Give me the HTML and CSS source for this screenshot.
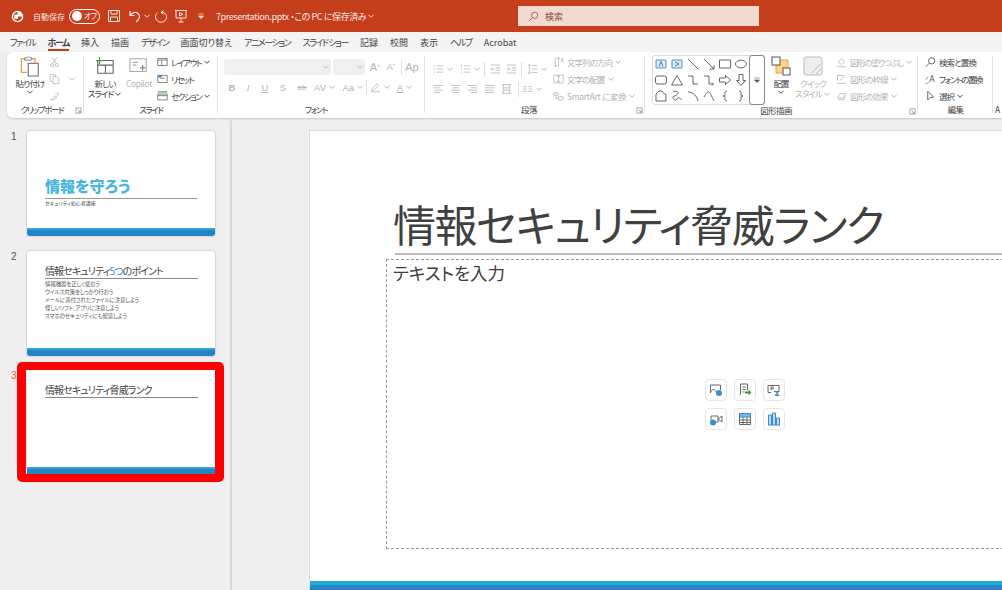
FILE: index.html
```html
<!DOCTYPE html>
<html lang="ja">

<head>
    <meta charset="UTF-8">
    <title>7presentation.pptx</title>
    <link rel="stylesheet" href="styles.css">
</head>

<body>
    <!-- 共通アイコン -->
    <svg class="sprite" xmlns="http://www.w3.org/2000/svg">
        <symbol id="chev" viewBox="0 0 8 8"><path d="M1.500 2.800 4 5.300l2.500-2.500" fill="none" stroke="currentColor" stroke-width="1"/></symbol>
        <symbol id="launcher" viewBox="0 0 8 8"><path d="M1 1h6v6H1zM3 3l3 3M6 4v2H4" fill="none" stroke="currentColor" stroke-width=".8"/></symbol>
        <symbol id="list-dots" viewBox="0 0 14 14"><path d="M5 3h8M5 7h8M5 11h8M1 3h2M1 7h2M1 11h2" fill="none" stroke="currentColor"/></symbol>
        <symbol id="list-num" viewBox="0 0 14 14"><path d="M5 3h8M5 7h8M5 11h8M2 1.500v3M1 7h2M1 11h2" fill="none" stroke="currentColor"/></symbol>
        <symbol id="indent-l" viewBox="0 0 14 14"><path d="M1 2h12M7 5.500h6M7 8.500h6M1 12h12M5 7H1M3 5 1 7l2 2" fill="none" stroke="currentColor"/></symbol>
        <symbol id="indent-r" viewBox="0 0 14 14"><path d="M1 2h12M7 5.500h6M7 8.500h6M1 12h12M1 7h4M3 5l2 2-2 2" fill="none" stroke="currentColor"/></symbol>
        <symbol id="line-sp" viewBox="0 0 14 14"><path d="M6 2.500h7M6 7h7M6 11.500h7M3 1v12M1.500 3 3 1l1.500 2M1.500 11 3 13l1.500-2" fill="none" stroke="currentColor"/></symbol>
        <symbol id="al-l" viewBox="0 0 14 14"><path d="M1 2.500h12M1 5.500h8M1 8.500h12M1 11.500h8" fill="none" stroke="currentColor"/></symbol>
        <symbol id="al-c" viewBox="0 0 14 14"><path d="M1 2.500h12M3 5.500h8M1 8.500h12M3 11.500h8" fill="none" stroke="currentColor"/></symbol>
        <symbol id="al-r" viewBox="0 0 14 14"><path d="M1 2.500h12M5 5.500h8M1 8.500h12M5 11.500h8" fill="none" stroke="currentColor"/></symbol>
        <symbol id="al-j" viewBox="0 0 14 14"><path d="M1 2.500h12M1 5.500h12M1 8.500h12M1 11.500h12" fill="none" stroke="currentColor"/></symbol>
        <symbol id="al-d" viewBox="0 0 14 14"><path d="M1 1.500h12M1 12.500h12M3 1.500v11M11 1.500v11M3 5.500h8M3 8.500h8" fill="none" stroke="currentColor"/></symbol>
        <symbol id="cols" viewBox="0 0 14 14"><path d="M1 4h5M8 4h5M1 7h5M8 7h5M1 10h5M8 10h5" fill="none" stroke="currentColor"/></symbol>
        <symbol id="fill" viewBox="0 0 14 14"><path d="M3 7 7 2.500 11 7l-4 3.500zM1 13h12" fill="none" stroke="currentColor"/></symbol>
        <symbol id="outline" viewBox="0 0 14 14"><path d="M2 9V2.500h8M5 8.500l7-6M1 12.500h12" fill="none" stroke="currentColor"/></symbol>
        <symbol id="effect" viewBox="0 0 14 14"><path d="M2 9.500 5 4h7l-2.500 5.500zM3 11.500h7l2-4" fill="none" stroke="currentColor"/></symbol>
    </svg>

    <header class="titlebar">
        <div class="title_left">
            <svg class="tb_logo" viewBox="0 0 14 14"><circle cx="7" cy="7" r="5.500" fill="none" stroke="#fff" stroke-width="1.500"/><path d="M7 7V1.500A5.500 5.500 0 0 1 12.500 7z" fill="#fff"/><rect x="3.500" y="5" width="4" height="4.500" fill="#fff"/></svg>
            <span class="autosave">自動保存</span>
            <span class="toggle"><i></i><b>オフ</b></span>
            <svg class="tb_icon save" viewBox="0 0 14 14"><path d="M1.500 1.500h11v11h-11zM4 1.500v3.500h6V1.500M3.500 12.500V8h7v4.500" fill="none" stroke="currentColor"/></svg>
            <svg class="tb_icon undo" viewBox="0 0 14 14"><path d="M2 2v4.500h4.500M2.300 6.300C4 3.500 7.500 2.500 10 4.500c2.500 2.200 2 5.500-2 8.500" fill="none" stroke="currentColor" stroke-width="1.200"/></svg>
            <svg class="tb_chev"><use href="#chev"/></svg>
            <svg class="tb_icon redo" viewBox="0 0 14 14"><path d="M9.500 1.500 7 3.500l2.500 1.500M7 3.500c3-.8 5.500 1.300 5.500 4.300a5.500 5.500 0 0 1-11 0c0-1.800.8-3.200 2-4.200" fill="none" stroke="currentColor"/></svg>
            <svg class="tb_icon present" viewBox="0 0 14 14"><path d="M1 1.500h12M2 1.500v7.500h10V1.500M7 9v4M4.500 13h5M5.500 3.500 9 5.300 5.500 7z" fill="none" stroke="currentColor"/></svg>
            <svg class="tb_more" viewBox="0 0 8 8"><path d="M1.500 2h5M1.500 4 4 6.500 6.500 4z" fill="currentColor" stroke="currentColor" stroke-width=".7"/></svg>
            <span class="filename">7presentation.pptx ・この PC に保存済み</span>
            <svg class="tb_chev"><use href="#chev"/></svg>
        </div>
        <div class="search">
            <svg viewBox="0 0 14 14"><circle cx="8.500" cy="5.500" r="4" fill="none" stroke="currentColor"/><path d="M5.500 8.500 1.500 12.500" stroke="currentColor" fill="none"/></svg>
            <span>検索</span>
        </div>
    </header>

    <nav class="tabs">
        <a class="kana">ファイル</a><a class="active kana">ホーム</a><a>挿入</a><a>描画</a><a class="kana">デザイン</a><a>画面切り替え</a><a class="kana">アニメーション</a><a class="kana">スライド ショー</a><a>記録</a><a>校閲</a><a>表示</a><a class="kana">ヘルプ</a><a>Acrobat</a>
    </nav>

    <section class="ribbon">
        <!-- クリップボード -->
        <div class="group g_clip">
            <div class="group_body">
                <div class="big_btn paste">
                    <svg class="big_icon" viewBox="0 0 22 24"><path d="M5 4H1.500v15H8M13 4h3.500v5" fill="none" stroke="#e5a04f" stroke-width="1.400"/><path d="M5 5.500V3h2.500a2 2 0 0 1 3.500 0H13v2.500z" fill="#fff" stroke="#777"/><rect x="9" y="9" width="11" height="14" fill="#fff" stroke="#555"/></svg>
                    <span>貼り付け</span>
                    <svg class="chev"><use href="#chev"/></svg>
                </div>
                <div class="list small_col">
                    <div class="row off"><svg class="ico" viewBox="0 0 14 14"><path d="M4 1l5 8M10 1 5 9" fill="none" stroke="currentColor"/><circle cx="4" cy="11" r="2" fill="none" stroke="currentColor"/><circle cx="10" cy="11" r="2" fill="none" stroke="currentColor"/></svg></div>
                    <div class="row off"><svg class="ico" viewBox="0 0 14 14"><path d="M4 10H1.500V1.500H8V4M5 4h5l2.500 2.500v6.500H5z" fill="none" stroke="currentColor"/></svg><svg class="chev far"><use href="#chev"/></svg></div>
                    <div class="row off"><svg class="ico" viewBox="0 0 14 14"><path d="M2 12c2-.5 4-2 5-5l2.500 2.500C8 11 6 12.500 2 12zM8 6l3-3.500 1.500 1.500L9.500 8" fill="none" stroke="currentColor"/></svg></div>
                </div>
            </div>
            <div class="group_label kana">クリップボード<svg class="launcher"><use href="#launcher"/></svg></div>
        </div>

        <!-- スライド -->
        <div class="group g_slide">
            <div class="group_body">
                <div class="big_btn new_slide">
                    <svg class="big_icon" viewBox="0 0 22 20"><path d="M3 4h17v14H3zM3 9h17M11.500 9v9" fill="none" stroke="#666" stroke-width="1.200"/><path d="M5 0v8M1 4h8" stroke="#3f9a4d" stroke-width="1.300"/></svg>
                    <span>新しい</span>
                    <span>スライド <svg class="chev inline"><use href="#chev"/></svg></span>
                </div>
                <div class="big_btn copilot off">
                    <svg class="big_icon" viewBox="0 0 22 18"><path d="M1 1h18v14H1zM4 5h6M4 8h4" fill="none" stroke="#aaa" stroke-width="1.200"/><path d="M15 8v6M12 11h6" stroke="#888" stroke-width="1.400"/></svg>
                    <span>Copilot</span>
                </div>
                <div class="list">
                    <div class="row kana"><svg class="ico" viewBox="0 0 14 12"><path d="M1 1.500h12v9H1zM1 3.500h12M6 3.500v7" fill="none" stroke="#666"/></svg>レイアウト<svg class="chev"><use href="#chev"/></svg></div>
                    <div class="row kana"><svg class="ico" viewBox="0 0 14 12"><path d="M1 1.500h12v9H1zM4 5h6" fill="none" stroke="#666"/><path d="M1 1h5v3H1z" fill="#3a8fd0"/></svg>リセット</div>
                    <div class="row kana"><svg class="ico" viewBox="0 0 14 12"><path d="M1 .800h12" stroke="#3f9a4d" stroke-width="1.500"/><path d="M1 3.500h12v7.500H1zM1 5.500h12" fill="none" stroke="#666"/></svg>セクション<svg class="chev"><use href="#chev"/></svg></div>
                </div>
            </div>
            <div class="group_label kana">スライド</div>
        </div>

        <!-- フォント -->
        <div class="group g_font">
            <div class="group_body stack off">
                <div class="tool_row">
                    <span class="select s_font"><svg class="chev"><use href="#chev"/></svg></span>
                    <span class="select s_size"><svg class="chev"><use href="#chev"/></svg></span>
                    <span class="cell w16 glyph">A<sup>^</sup></span>
                    <span class="cell w16 glyph small">A<sup>ˇ</sup></span>
                    <i class="sep"></i>
                    <span class="cell w16 glyph">Ap</span>
                </div>
                <div class="tool_row">
                    <span class="cell w16 fmt b">B</span>
                    <span class="cell w16 fmt i">I</span>
                    <span class="cell w18 fmt u">U</span>
                    <span class="cell w18 fmt">S</span>
                    <span class="cell w20 fmt tiny s">ab</span>
                    <span class="cell w24 fmt end">AV<svg class="chev"><use href="#chev"/></svg></span>
                    <span class="cell w28 fmt end">Aa<svg class="chev"><use href="#chev"/></svg></span>
                    <i class="sep"></i>
                    <span class="cell w22"><svg class="ico" viewBox="0 0 14 14"><path d="M3 9l6-6 2 2-6 6-3 .5zM1 13h12" fill="none" stroke="currentColor"/></svg><svg class="chev"><use href="#chev"/></svg></span>
                    <span class="cell w28 fmt u">A<svg class="chev"><use href="#chev"/></svg></span>
                </div>
            </div>
            <div class="group_label kana">フォント</div>
        </div>

        <!-- 段落 -->
        <div class="group g_para">
            <div class="group_body">
                <div class="stack off para_tools">
                    <div class="tool_row">
                        <span class="cell w27 start"><svg class="ico"><use href="#list-dots"/></svg><svg class="chev"><use href="#chev"/></svg></span>
                        <span class="cell w24 start"><svg class="ico"><use href="#list-num"/></svg><svg class="chev"><use href="#chev"/></svg></span>
                        <i class="sep"></i>
                        <span class="cell w16"><svg class="ico"><use href="#indent-l"/></svg></span>
                        <span class="cell w16"><svg class="ico"><use href="#indent-r"/></svg></span>
                        <i class="sep"></i>
                        <span class="cell w26"><svg class="ico"><use href="#line-sp"/></svg><svg class="chev"><use href="#chev"/></svg></span>
                    </div>
                    <div class="tool_row">
                        <span class="cell w17 start"><svg class="ico"><use href="#al-l"/></svg></span>
                        <span class="cell w17 start"><svg class="ico"><use href="#al-c"/></svg></span>
                        <span class="cell w17 start"><svg class="ico"><use href="#al-r"/></svg></span>
                        <span class="cell w17 start"><svg class="ico"><use href="#al-j"/></svg></span>
                        <span class="cell w17 start"><svg class="ico"><use href="#al-d"/></svg></span>
                        <i class="sep"></i>
                        <span class="cell w22"><svg class="ico"><use href="#cols"/></svg><svg class="chev"><use href="#chev"/></svg></span>
                    </div>
                </div>
                <div class="list off">
                    <div class="row"><svg class="ico" viewBox="0 0 14 14"><path d="M3 1v12M1 11l2 2 2-2M7 13V1M5.500 3 7 1l1.500 2M10 7l1.500-5L13 7" fill="none" stroke="currentColor"/></svg>文字列の方向<svg class="chev"><use href="#chev"/></svg></div>
                    <div class="row"><svg class="ico" viewBox="0 0 14 14"><path d="M1 2v10h12V2zM7 2.500v9M5 4.500l2-2 2 2M5 9.500l2 2 2-2" fill="none" stroke="currentColor"/></svg>文字の配置<svg class="chev"><use href="#chev"/></svg></div>
                    <div class="row latin"><svg class="ico" viewBox="0 0 14 14"><path d="M1 3h5v3H1zM4 6v4h3M7 8h6v4H7z" fill="none" stroke="currentColor"/></svg>SmartArt に変換<svg class="chev"><use href="#chev"/></svg></div>
                </div>
            </div>
            <div class="group_label">段落<svg class="launcher"><use href="#launcher"/></svg></div>
        </div>

        <!-- 図形描画 -->
        <div class="group g_shape">
            <div class="group_body">
                <div class="gallery">
                    <div class="shapes">
                        <svg viewBox="0 0 12 12"><path d="M1 2h10v8H1z" fill="#dcecf8" stroke="#3a8fd0"/><path d="M4 8.500 6 3.500l2 5" fill="none" stroke="#3a6fa0"/></svg>
                        <svg viewBox="0 0 12 12"><path d="M1 2h10v8H1z" fill="#dcecf8" stroke="#3a8fd0"/><path d="M4 4l4 2-4 2" fill="none" stroke="#3a6fa0"/></svg>
                        <svg viewBox="0 0 12 12"><path d="M1 1l10 10"/></svg>
                        <svg viewBox="0 0 12 12"><path d="M1 1l10 10M11 7v4H7"/></svg>
                        <svg viewBox="0 0 12 12"><path d="M.5 2h11v8H.5z"/></svg>
                        <svg viewBox="0 0 12 12"><ellipse cx="6" cy="6" rx="5.500" ry="3.800"/></svg>
                        <svg viewBox="0 0 12 12"><rect x=".5" y="2" width="11" height="8" rx="2"/></svg>
                        <svg viewBox="0 0 12 12"><path d="M6 1.500 11.500 11H.5z"/></svg>
                        <svg viewBox="0 0 12 12"><path d="M1 2h5v8h5"/></svg>
                        <svg viewBox="0 0 12 12"><path d="M1 2h5v8h4M9 8.500 10.500 10 9 11.500"/></svg>
                        <svg viewBox="0 0 12 12"><path d="M.5 4h6V1.500L11.500 6l-5 4.500V8h-6z"/></svg>
                        <svg viewBox="0 0 12 12"><path d="M4 .5h4v6h2.500L6 11.500 1.500 6.500H4z"/></svg>
                        <svg viewBox="0 0 12 12"><path d="M1 11V4l3-3h3c.5 2 3 3 4 3.500V11z"/></svg>
                        <svg viewBox="0 0 12 12"><path d="M2 2c3-2 7 0 4 2.500S1 6 2 8s3 3 4 1 3-1 5 1"/></svg>
                        <svg viewBox="0 0 12 12"><path d="M1 2c5 0 9 4 10 9"/></svg>
                        <svg viewBox="0 0 12 12"><path d="M1 7c2-3 3-6 5-5s3 6 5 9"/></svg>
                        <svg viewBox="0 0 12 12"><path d="M8 1C5.500 1 6 3 6 4.500S5.500 6 4 6c1.500 0 2 0 2 1.500S5.500 11 8 11"/></svg>
                        <svg viewBox="0 0 12 12"><path d="M4 1c2.500 0 2 2 2 3.500S6.500 6 8 6c-1.500 0-2 0-2 1.500S6.500 11 4 11"/></svg>
                    </div>
                    <div class="gallery_more"><svg viewBox="0 0 8 8"><path d="M1.500 2h5M1.500 4 4 6.500 6.500 4z" fill="#555" stroke="#555" stroke-width=".6"/></svg></div>
                </div>
                <div class="big_btn arrange">
                    <svg class="big_icon" viewBox="0 0 20 20"><path d="M5 4h12v13H5z" fill="#fbd58c" stroke="#e5a04f"/><rect x="1" y="1" width="8" height="8" fill="#fff" stroke="#555"/><rect x="12" y="12" width="7" height="7" fill="#fff" stroke="#555"/></svg>
                    <span>配置</span>
                    <svg class="chev"><use href="#chev"/></svg>
                </div>
                <div class="big_btn quick off">
                    <svg class="big_icon" viewBox="0 0 20 20"><rect x="1" y="1" width="18" height="18" rx="2" fill="#eee" stroke="#bbb"/><path d="M9 17l8-9M13 18l5-5" stroke="#bbb" fill="none"/></svg>
                    <span>クイック</span>
                    <span>スタイル <svg class="chev inline"><use href="#chev"/></svg></span>
                </div>
                <div class="list off">
                    <div class="row kana"><svg class="ico"><use href="#fill"/></svg>図形の塗りつぶし<svg class="chev"><use href="#chev"/></svg></div>
                    <div class="row"><svg class="ico"><use href="#outline"/></svg>図形の枠線<svg class="chev"><use href="#chev"/></svg></div>
                    <div class="row"><svg class="ico"><use href="#effect"/></svg>図形の効果<svg class="chev"><use href="#chev"/></svg></div>
                </div>
            </div>
            <div class="group_label">図形描画<svg class="launcher"><use href="#launcher"/></svg></div>
        </div>

        <!-- 編集 -->
        <div class="group g_edit">
            <div class="group_body">
                <div class="list">
                    <div class="row"><svg class="ico" viewBox="0 0 14 14"><circle cx="8.500" cy="5.500" r="4" fill="none" stroke="#444"/><path d="M5.500 8.500 1 13" stroke="#444" fill="none"/></svg>検索と置換</div>
                    <div class="row kana"><svg class="ico" viewBox="0 0 14 14"><path d="M1.500 8a3 3 0 0 1 3-3M1 12c1.500 1 3 .5 4-1" fill="none" stroke="#3a8fd0"/><path d="M6 11 9 2l3 9M7 8h4" fill="none" stroke="#555"/></svg>フォントの置換</div>
                    <div class="row"><svg class="ico" viewBox="0 0 14 14"><path d="M3.500 1v11l3-3 4.500-.5z" fill="none" stroke="#444"/></svg>選択<svg class="chev"><use href="#chev"/></svg></div>
                </div>
            </div>
            <div class="group_label">編集</div>
        </div>
        <div class="group g_acro">
            <div class="group_body"></div>
            <div class="group_label">A</div>
        </div>
    </section>

    <main class="workspace">
        <aside class="thumbs">
            <div class="thumb_row">
                <span class="num">1</span>
                <div class="thumb t1">
                    <h2 class="cover_title">情報を守ろう</h2>
                    <div class="cover_sub">セキュリティ初心者講座</div>
                    <div class="thumb_bar"></div>
                </div>
            </div>
            <div class="thumb_row">
                <span class="num">2</span>
                <div class="thumb t2">
                    <h2 class="thumb_title">情報セキュリティ<em>5つ</em>のポイント</h2>
                    <ul class="thumb_list">
                        <li>情報機器を正しく使おう</li>
                        <li>ウイルス対策をしっかり行おう</li>
                        <li>メールに添付されたファイルに注意しよう</li>
                        <li>怪しいソフト、アプリに注意しよう</li>
                        <li>スマホのセキュリティにも留意しよう</li>
                    </ul>
                    <div class="thumb_bar"></div>
                </div>
            </div>
            <div class="thumb_row current">
                <span class="num">3</span>
                <div class="thumb t3">
                    <h2 class="thumb_title">情報セキュリティ脅威ランク</h2>
                    <div class="thumb_bar"></div>
                </div>
            </div>
        </aside>

        <div class="editor">
            <div class="slide">
                <h1 class="slide_title">情報セキュリティ脅威ランク</h1>
                <div class="placeholder">
                    <p>テキストを入力</p>
                    <div class="insert_grid">
                        <span><svg viewBox="0 0 14 14"><path d="M1.500 10V2h10v5M1.500 9l3-3 3 3" fill="none" stroke="#666"/><circle cx="10" cy="10" r="3" fill="#3a8fd0"/></svg></span>
                        <span><svg viewBox="0 0 14 14"><path d="M2.500 12V1h7v6M4.500 4h3M4.500 6.500h3M4.500 9h2" fill="none" stroke="#666"/><path d="M7 8.500h3.500V6.500l3 3-3 3v-2H7z" fill="#3f9a4d"/></svg></span>
                        <span><svg viewBox="0 0 14 14"><path d="M1 2.500h11v6H7M1 2.500v7h3" fill="none" stroke="#666"/><path d="M4 4v3M4 4h1.500a1 1 0 0 1 0 2H4" fill="none" stroke="#666"/><circle cx="10" cy="9.500" r="1.300" fill="#3a8fd0"/><path d="M7.500 13a2.500 2 0 0 1 5 0z" fill="#3a8fd0"/></svg></span>
                        <span><svg viewBox="0 0 14 14"><path d="M2 8V4h7v6H7M9 7l4-3v6L9 7" fill="none" stroke="#666"/><circle cx="4" cy="10.500" r="3" fill="#3a8fd0"/></svg></span>
                        <span><svg viewBox="0 0 14 14"><path d="M1.500 1.500h11v11h-11zM1.500 8h11M1.500 10.500h11M5 5v7.500M9 5v7.500" fill="none" stroke="#666"/><path d="M1.500 1.500h11V5h-11z" fill="#7fb3dd" stroke="#3a8fd0"/></svg></span>
                        <span><svg viewBox="0 0 14 14"><path d="M1.500 13V3h3v10M5.500 13V1h3v12M9.500 13V6h3v7M1 13h12" fill="#bcd8ef" stroke="#3a8fd0"/></svg></span>
                    </div>
                </div>
                <div class="slide_bar"></div>
            </div>
        </div>
    </main>
</body>

</html>
```

FILE: styles.css
```css
* {
    margin: 0;
    padding: 0;
    box-sizing: border-box;
}

html,
body {
    width: 1002px;
    height: 590px;
    overflow: hidden;
}

body {
    font-family: "Noto Sans CJK JP", "Liberation Sans", sans-serif;
    font-feature-settings: "palt";
    font-size: 8.500px;
    color: #444;
    background-color: #efefef;
}

.sprite {
    display: none;
}

/* タイトルバー */
.titlebar {
    display: flex;
    align-items: center;
    height: 32px;
    background-color: #c43e1c;
    color: #fbe7e0;
}

.title_left {
    display: flex;
    align-items: center;
    width: 518px;
    padding-left: 11px;
    flex-shrink: 0;
}

.tb_logo {
    width: 13px;
    height: 13px;
    margin-right: 9px;
}

.autosave {
    width: 31px;
    font-size: 8px;
    white-space: nowrap;
}

.toggle {
    display: flex;
    align-items: center;
    width: 31px;
    height: 15px;
    margin-left: 5px;
    padding: 0 2px;
    border: 1px solid #fff;
    border-radius: 8px;
}

.toggle i {
    flex-shrink: 0;
    width: 10px;
    height: 10px;
    background-color: #fff;
    border-radius: 50%;
}

.toggle b {
    margin-left: 2px;
    font-weight: 400;
    font-size: 8px;
    letter-spacing: -1px;
    line-height: 1;
    white-space: nowrap;
}

.tb_icon {
    width: 14px;
    height: 14px;
}

.save {
    margin-left: 7px;
}

.undo {
    margin-left: 7px;
}

.tb_chev {
    width: 8px;
    height: 8px;
    margin-left: 1px;
}

.redo {
    margin-left: 3px;
}

.present {
    margin-left: 6px;
}

.tb_more {
    width: 8px;
    height: 8px;
    margin-left: 9px;
}

.filename {
    margin-left: 11px;
    font-size: 9px;
    letter-spacing: -.4px;
    white-space: nowrap;
}

.search {
    display: flex;
    align-items: center;
    width: 241px;
    height: 20px;
    padding-left: 10px;
    background-color: #f2dad2;
    color: #8f4a34;
    font-size: 9px;
}

.search svg {
    width: 11px;
    height: 11px;
    margin-right: 6px;
}

/* タブ */
.tabs {
    display: flex;
    align-items: center;
    gap: 12px;
    height: 20px;
    padding-left: 10px;
    font-size: 9px;
    background-color: #f4f4f4;
}

.tabs a {
    position: relative;
    white-space: nowrap;
}

.tabs .active {
    font-weight: 700;
}

.tabs .active::after {
    content: "";
    position: absolute;
    left: 0;
    right: 0;
    bottom: -2px;
    height: 1.500px;
    background-color: #c43e1c;
}

/* リボン */
.ribbon {
    display: flex;
    height: 66px;
    margin-left: 7px;
    background-color: #fff;
    border-radius: 6px 0 0 6px;
    box-shadow: 0 1px 2px rgba(0, 0, 0, .18);
}

.group {
    position: relative;
    display: flex;
    flex-direction: column;
    flex-shrink: 0;
    height: 100%;
}

.group::after {
    content: "";
    position: absolute;
    top: 4px;
    bottom: 5px;
    right: 0;
    width: 1px;
    background-color: #e4e4e4;
}

.g_clip {
    width: 77px;
}

.g_slide {
    width: 134px;
}

.g_font {
    width: 207px;
}

.g_para {
    width: 220px;
}

.g_shape {
    width: 273px;
}

.g_edit {
    width: 75px;
}

.g_acro {
    flex: 1;
}

.g_acro::after {
    display: none;
}

.group_body {
    display: flex;
    flex: 1;
    padding-top: 2px;
}

.group_label {
    position: relative;
    height: 14px;
    line-height: 11px;
    text-align: center;
    letter-spacing: -.6px;
    white-space: nowrap;
}

.g_clip .group_label {
    padding-right: 7px;
}

.g_font .group_label,
.g_shape .group_label {
    padding-right: 11px;
}

.g_para .group_label {
    padding-right: 12px;
}

.g_acro .group_label {
    text-align: left;
    padding-left: 2px;
}

.launcher {
    position: absolute;
    right: 2px;
    top: 3px;
    width: 7px;
    height: 7px;
    color: #888;
}

.off {
    color: #b4b4b4;
}

.chev {
    flex-shrink: 0;
    width: 8px;
    height: 8px;
    margin-left: 2px;
}

.chev.inline {
    margin-left: 0;
    vertical-align: -1px;
}

.chev.far {
    margin-left: 5px;
}

.ico {
    flex-shrink: 0;
    width: 11px;
    height: 12px;
    margin-right: 3px;
}

.big_btn {
    display: flex;
    flex-direction: column;
    align-items: center;
    flex-shrink: 0;
    line-height: 10px;
    letter-spacing: -.9px;
    white-space: nowrap;
}

.big_icon {
    width: 20px;
    height: 22px;
    margin-top: 1px;
    margin-bottom: 1px;
}

.big_btn .chev {
    margin-left: 0;
}

.paste {
    width: 30px;
    margin-left: 8px;
}

.new_slide {
    width: 34px;
    margin-left: 4px;
}

.copilot {
    width: 30px;
    margin-left: 2px;
}

.copilot span {
    letter-spacing: -.4px;
}

.arrange {
    width: 24px;
    margin-left: 4px;
}

.quick {
    width: 34px;
    margin-left: 3px;
}

.list {
    display: flex;
    flex-direction: column;
    margin-top: -1px;
    margin-left: 3px;
}

.small_col {
    margin-left: 4px;
}

.g_shape .list {
    margin-left: 6px;
}

.g_edit .list {
    margin-left: 7px;
}

.row {
    display: flex;
    align-items: center;
    height: 17px;
    letter-spacing: -.9px;
    white-space: nowrap;
}

.row.latin {
    letter-spacing: -.3px;
}

/* カナの多い文字は詰める */
.tabs .kana,
.group_label.kana,
.row.kana {
    letter-spacing: -1.400px;
}

.stack {
    display: flex;
    flex-direction: column;
    gap: 4px;
    padding-top: 7px;
    padding-left: 6px;
}

.para_tools {
    width: 125px;
    flex-shrink: 0;
}

.tool_row {
    display: flex;
    align-items: center;
    height: 16px;
}

.select {
    display: flex;
    align-items: center;
    justify-content: flex-end;
    height: 16px;
    margin-right: 2px;
    padding-right: 1px;
    background-color: #f0f0f0;
    border-radius: 3px;
}

.s_font {
    width: 107px;
}

.s_size {
    width: 32px;
}

.cell {
    display: flex;
    align-items: center;
    justify-content: center;
    flex-shrink: 0;
    height: 16px;
}

.cell.start {
    justify-content: flex-start;
    padding-left: 2px;
}

.cell.end {
    justify-content: flex-end;
}

.cell .ico {
    margin-right: 0;
}

.w16 {
    width: 16px;
}

.w17 {
    width: 17px;
}

.w18 {
    width: 18px;
}

.w20 {
    width: 20px;
}

.w22 {
    width: 22px;
}

.w24 {
    width: 24px;
}

.w26 {
    width: 26px;
}

.w27 {
    width: 27px;
}

.w28 {
    width: 28px;
}

.sep {
    flex-shrink: 0;
    width: 1px;
    height: 15px;
    margin: 0 2px;
    background-color: #e0e0e0;
}

.fmt {
    font-family: "Liberation Sans", sans-serif;
    font-size: 9.500px;
}

.fmt.b {
    font-weight: 700;
}

.fmt.i {
    font-style: italic;
}

.fmt.u {
    text-decoration: underline;
}

.fmt.s {
    text-decoration: line-through;
}

.fmt.tiny {
    font-size: 8px;
}

.glyph {
    font-family: "Liberation Sans", sans-serif;
    font-size: 11px;
}

.glyph.small {
    font-size: 9px;
}

.glyph sup {
    font-size: 7px;
    line-height: 0;
}

/* 図形ギャラリー */
.gallery {
    display: flex;
    height: 50px;
    margin-top: 1px;
    margin-left: 7px;
    border: 1px solid #ddd;
    border-radius: 3px;
}

.shapes {
    display: grid;
    grid-template-columns: repeat(6, 16px);
    grid-template-rows: repeat(3, 16px);
}

.shapes svg {
    width: 12px;
    height: 12px;
    margin: 2px;
    fill: none;
    stroke: #555;
    stroke-width: .9;
}

.gallery_more {
    display: flex;
    align-items: center;
    justify-content: center;
    width: 16px;
    border: 1px solid #888;
    border-radius: 3px;
    margin: -1px -1px -1px 0;
}

.gallery_more svg {
    width: 8px;
    height: 8px;
}

/* サムネイル */
.workspace {
    display: flex;
    height: 472px;
    overflow: hidden;
}

.thumbs {
    display: flex;
    flex-direction: column;
    gap: 14.500px;
    width: 232px;
    flex-shrink: 0;
    padding-top: 13px;
    border-right: 2px solid #d9d9d9;
}

.thumb_row {
    position: relative;
    display: flex;
    padding-left: 11px;
}

.num {
    width: 16px;
    font-family: "Liberation Sans", sans-serif;
    font-size: 10px;
    line-height: 12px;
    color: #555;
}

.thumb {
    display: flex;
    flex-direction: column;
    width: 188px;
    height: 105px;
    overflow: hidden;
    background-color: #fff;
    border-radius: 3px;
    box-shadow: 0 0 2px rgba(0, 0, 0, .35);
}

.thumb h2,
.thumb ul {
    margin-left: 18px;
}

.thumb_bar {
    height: 8px;
    margin-top: auto;
    background: linear-gradient(#2ea4dc 0, #2ea4dc 2px, #2784c4 2px);
}

.cover_title {
    width: 152px;
    margin-top: 44px;
    padding-bottom: 1px;
    color: #4bb5e2;
    font-size: 15px;
    line-height: 22px;
    font-weight: 900;
    border-bottom: 1px solid #999;
}

.cover_sub {
    margin: 1px 0 0 18px;
    font-size: 5px;
    line-height: 6px;
}

.thumb_title {
    width: 153px;
    margin-top: 13px;
    font-size: 10px;
    letter-spacing: -.9px;
    font-weight: 400;
    line-height: 14px;
    border-bottom: 1px solid #888;
}

.thumb_title em {
    font-style: normal;
    color: #3a8fd0;
}

.thumb_list {
    margin-top: 1px;
    list-style: none;
    font-size: 5.500px;
    line-height: 8.200px;
    letter-spacing: -.15px;
    color: #555;
}

.current .num {
    color: #e5583a;
}

.current .thumb {
    border-radius: 0;
    box-shadow: none;
}

/* 赤枠(注釈) */
.current::after {
    content: "";
    position: absolute;
    left: 17px;
    top: -8px;
    box-sizing: border-box;
    width: 207px;
    height: 120px;
    border-style: solid;
    border-color: #f00;
    border-width: 8px 9.500px;
    border-radius: 5px;
}

/* スライド編集 */
.editor {
    flex: 1;
    min-width: 0;
    padding: 12px 0 0 77px;
}

.slide {
    display: flex;
    flex-direction: column;
    width: 800px;
    height: 460px;
    background-color: #fff;
    border: 1px solid #dcdcdc;
    border-right: 0;
    border-bottom: 0;
}

.slide_title {
    height: 124px;
    margin-left: 85px;
    padding-top: 62px;
    border-bottom: 2px solid #bdbdbd;
    font-size: 43px;
    letter-spacing: -1.400px;
    text-indent: -2px;
    line-height: 60px;
    font-weight: 400;
    color: #404040;
    white-space: nowrap;
}

.placeholder {
    position: relative;
    height: 290px;
    margin: 4px 0 0 76px;
    padding: 2px 6px;
    border: 1px dashed #9a9a9a;
}

.placeholder p {
    font-size: 17.500px;
    line-height: 22px;
    color: #404040;
}

/* 中央の挿入アイコン */
.insert_grid {
    position: absolute;
    left: 318px;
    top: 119px;
    display: grid;
    grid-template-columns: repeat(3, 22px);
    gap: 7px;
}

.insert_grid span {
    display: flex;
    align-items: center;
    justify-content: center;
    height: 22px;
    border: 1px solid #e6e6e6;
    border-radius: 4px;
}

.insert_grid svg {
    width: 14px;
    height: 14px;
}

.slide_bar {
    height: 9px;
    margin-top: auto;
    background: linear-gradient(#1fa9dc 0, #1fa9dc 4px, #2a85c4 4px);
}
```
